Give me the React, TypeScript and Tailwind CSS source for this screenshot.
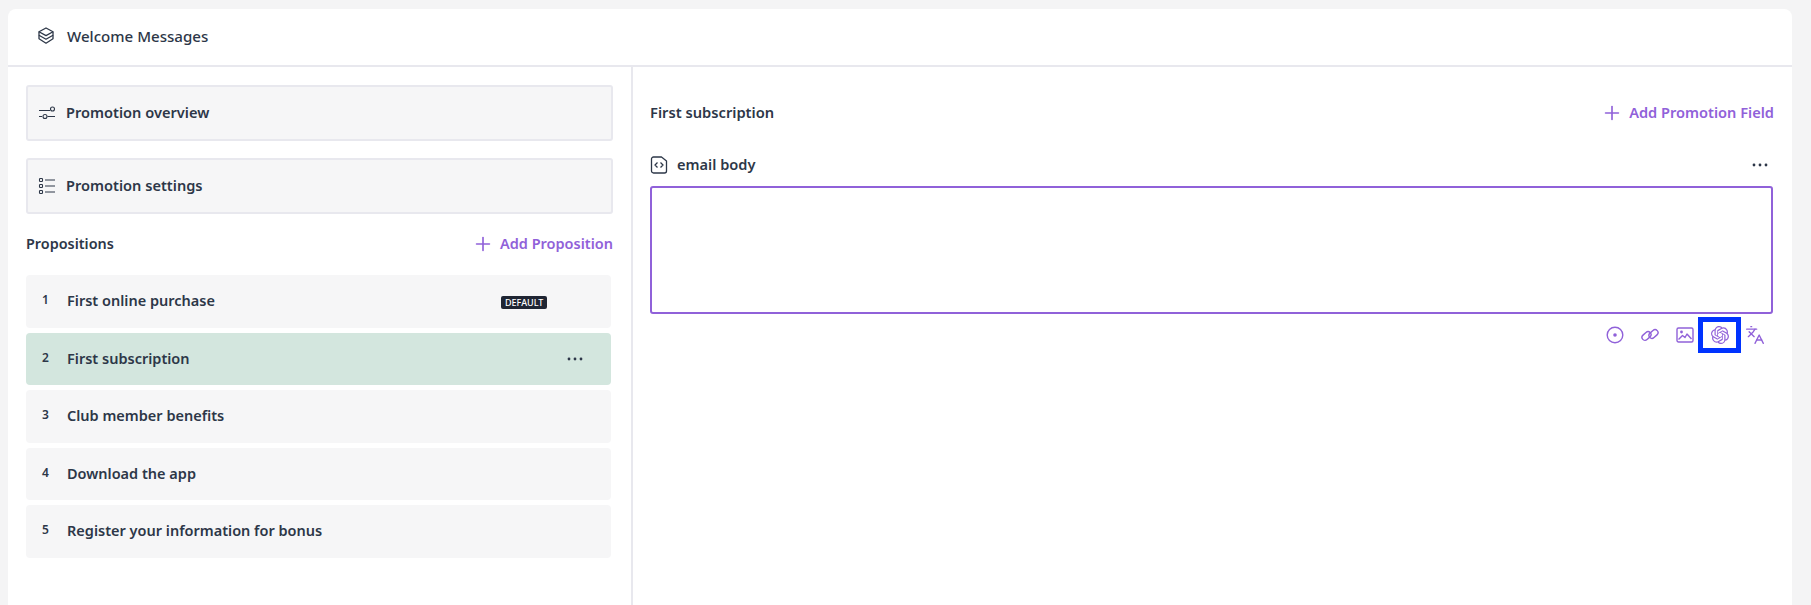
import { Languages, Plus } from 'lucide-react';
import { SiOpenai } from 'react-icons/si';

const propositions = [
  { id: 1, name: 'First online purchase', isDefault: true },
  { id: 2, name: 'First subscription', active: true },
  { id: 3, name: 'Club member benefits' },
  { id: 4, name: 'Download the app' },
  { id: 5, name: 'Register your information for bonus' },
];

const Dots = () => (
  <svg width="16" height="4" viewBox="0 0 16 4" fill="#2d3748">
    <circle cx="2" cy="2" r="1.4" />
    <circle cx="8" cy="2" r="1.4" />
    <circle cx="14" cy="2" r="1.4" />
  </svg>
);

const StackIcon = () => (
  <svg width="20" height="20" viewBox="0 0 20 20" fill="none" stroke="#2d3748" strokeWidth="1.3" strokeLinejoin="round">
    <path d="M10 2l7 3.800L10 9.600 3 5.800z" />
    <path d="M3 5.800v3.500l7 3.900 7-3.900V5.800" />
    <path d="M3 9.300v3.500l7 4.400 7-4.400V9.300" />
  </svg>
);

const SlidersIcon = () => (
  <svg width="18" height="18" viewBox="0 0 18 18" fill="none" stroke="#2d3748" strokeWidth="1.1">
    <path d="M1 6.500h11M1 12.500h3M9.500 12.500h7.500" />
    <circle cx="14.500" cy="5" r="2" />
    <circle cx="7" cy="12.500" r="2" />
  </svg>
);

const ListIcon = () => (
  <svg width="18" height="18" viewBox="0 0 18 18" fill="none" stroke="#2d3748" strokeWidth="1.1">
    <rect x="1.500" y="1.500" width="3" height="3" rx=".7" />
    <rect x="1.500" y="7.500" width="3" height="3" rx=".7" />
    <rect x="1.500" y="13.500" width="3" height="3" rx=".7" />
    <path d="M7 3h10M7 9h10M7 15h10" />
  </svg>
);

const CodeFileIcon = () => (
  <svg width="18" height="18" viewBox="0 0 18 18" fill="none" stroke="#2d3748" strokeWidth="1.3" strokeLinejoin="round">
    <path d="M3.500 1h8L16.500 5v10a2 2 0 0 1-2 2h-11a2 2 0 0 1-2-2V3a2 2 0 0 1 2-2z" />
    <path d="M7.500 6.500L5 9l2.500 2.500M10.500 6.500L13 9l-2.500 2.500" />
  </svg>
);

const TargetIcon = () => (
  <svg width="18" height="18" viewBox="0 0 18 18" fill="none" stroke="#9061d9" strokeWidth="1.4">
    <circle cx="9" cy="9" r="7.800" />
    <circle cx="9" cy="9" r="1.800" fill="#9061d9" stroke="none" />
  </svg>
);

const LinkIcon = () => (
  <svg width="18" height="18" viewBox="0 0 18 18" fill="none" stroke="#9061d9" strokeWidth="1.4">
    <rect x="0.500" y="7" width="10" height="6" rx="3" transform="rotate(-42 5.500 10)" />
    <rect x="7.500" y="5" width="10" height="6" rx="3" transform="rotate(-42 12.500 8)" />
  </svg>
);

const ImageIcon = () => (
  <svg width="18" height="18" viewBox="0 0 18 18" fill="none" stroke="#9061d9" strokeWidth="1.4" strokeLinejoin="round">
    <rect x="1" y="2" width="16" height="14" rx="1.500" />
    <circle cx="5.500" cy="6" r="1.400" fill="#9061d9" stroke="none" />
    <path d="M2.500 13.500L6.500 9.500l2.500 2L11 8l4.500 5" />
  </svg>
);

const AddButton = ({ label, className }: { label: string; className: string }) => (
  <button className={`flex items-center gap-[6px] font-semibold text-[#9061d9] ${className}`}>
    <Plus size={22} strokeWidth={1.8} />
    {label}
  </button>
);

const SettingBox = ({ icon, label }: { icon: React.ReactNode; label: string }) => (
  <div className="flex h-[56px] items-center gap-[10px] rounded-[3px] border-2 border-[#e8e8ee] bg-[#f6f6f7] pb-[1px] pl-[10px] text-[14.6px] font-semibold text-[#2d3748]">
    {icon}
    {label}
  </div>
);

export default function App() {
  return (
    <div className="h-[605px] overflow-hidden bg-[#f4f4f5] pl-2 pr-[19px] pt-[9px] font-['Noto_Sans',sans-serif] text-[#2d3748]">
      <div className="flex h-[596px] flex-col rounded-t-[8px] bg-white">
        <div className="flex h-[58px] shrink-0 items-center gap-[11px] border-b-2 border-[#e8e8ee] pb-[2px] pl-[28px] text-[15.1px] font-medium">
          <StackIcon />
          Welcome Messages
        </div>
        <div className="flex min-h-0 flex-1">
          <div className="w-[625px] shrink-0 border-r-2 border-[#e8e8ee] pl-[18px] pr-[18px] pt-[18px]">
            <div className="flex flex-col gap-[17px]">
              <SettingBox icon={<SlidersIcon />} label="Promotion overview" />
              <SettingBox icon={<ListIcon />} label="Promotion settings" />
            </div>
            <div className="mt-[18px] flex h-[24px] items-center justify-between text-[14.4px] font-semibold">
              <span className="pb-[1px]">Propositions</span>
              <AddButton label="Add Proposition" className="text-[14.5px]" />
            </div>
            <div className="mt-[19px] flex w-[585px] flex-col gap-[5px]">
              {propositions.map((p) => (
                <div
                  key={p.id}
                  className={`relative flex h-[52.5px] items-center rounded-[4px] pl-[16px] text-[14.5px] font-semibold ${p.active ? 'bg-[#d3e6de]' : 'bg-[#f6f6f7]'}`}
                >
                  <span className="w-[25px] pb-[2px] text-[12px]">{p.id}</span>
                  {p.name}
                  {p.isDefault && (
                    <span className="absolute left-[475px] top-[21px] rounded-[2px] bg-[#1f2533] px-[4px] text-[9px] font-medium leading-[13px] text-white">
                      DEFAULT
                    </span>
                  )}
                  {p.active && (
                    <span className="absolute left-[541px] top-[24px] flex">
                      <Dots />
                    </span>
                  )}
                </div>
              ))}
            </div>
          </div>
          <div className="min-w-0 flex-1 pl-[17px] pr-[18px] pt-[34px]">
            <div className="flex h-[24px] items-center justify-between text-[14.7px] font-semibold">
              <span className="pb-[2px]">First subscription</span>
              <AddButton label="Add Promotion Field" className="text-[14.6px]" />
            </div>
            <div className="mr-[1px] mt-[31px] flex h-[18px] items-center justify-between text-[14.6px] font-semibold">
              <span className="flex items-center gap-[9px]">
                <CodeFileIcon />
                email body
              </span>
              <span className="mr-[5px]">
                <Dots />
              </span>
            </div>
            <div className="mr-[1px] mt-[12px] h-[128px] rounded-[3px] border-2 border-[#9061d9]" />
            <div className="mr-[1px] mt-[3px] flex items-center justify-end gap-[17px] pr-[8px] text-[#9061d9]">
              <TargetIcon />
              <LinkIcon />
              <ImageIcon />
              <span className="-mx-[13px] flex h-[36px] w-[43px] items-center justify-center border-[5px] border-[#0033ff]">
                <SiOpenai size={18} />
              </span>
              <Languages size={20} strokeWidth={1.6} />
            </div>
          </div>
        </div>
      </div>
    </div>
  );
}
